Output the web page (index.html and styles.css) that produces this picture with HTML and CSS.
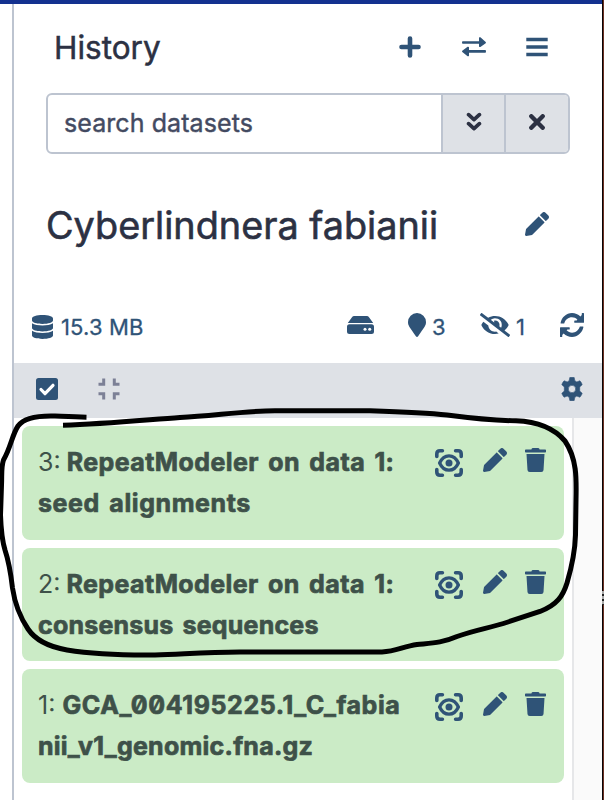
FILE: index.html
```html
<!DOCTYPE html>
<html lang="en">
<head>
<meta charset="utf-8">
<title>History</title>
<link rel="stylesheet" href="styles.css">
</head>
<body>
<svg class="defs" aria-hidden="true">
  <symbol id="pencil" viewBox="0 0 512 512"><path d="M498 142l-46 46c-5 5-13 5-17 0L324 77c-5-5-5-12 0-17l46-46c19-19 49-19 68 0l60 60c19 19 19 49 0 68zM285 99L22 362 0 484c-3 16 12 30 28 28l122-22 262-262c5-5 5-13 0-17L301 99c-4-5-12-5-16 0z"/></symbol>
  <symbol id="trash" viewBox="0 0 448 512"><path d="M432 32H312l-9-19A24 24 0 0 0 281 0H167a24 24 0 0 0-22 13l-9 19H16A16 16 0 0 0 0 48v32a16 16 0 0 0 16 16h416a16 16 0 0 0 16-16V48a16 16 0 0 0-16-16zM32 128l21 339a48 48 0 0 0 48 45h246a48 48 0 0 0 48-45l21-339z"/></symbol>
  <symbol id="view" viewBox="0 0 28 28"><g fill="none" stroke="currentColor" stroke-width="3.600" stroke-linecap="round"><path d="M7.400 1.800H5Q1.800 1.800 1.800 5v2.400M20.600 1.800H23q3.200 0 3.200 3.200v2.400M7.400 26.200H5Q1.800 26.200 1.800 23v-2.400M20.600 26.200H23q3.200 0 3.200-3.200v-2.400"/><path d="M4.600 14C9 4.400 19 4.400 23.400 14C19 23.600 9 23.600 4.600 14z" stroke-width="3.300" stroke-linejoin="round"/></g><circle cx="14" cy="14" r="3.500"/></symbol>
</svg>
<div class="topbar"></div>
<div class="window">
  <main class="panel">
    <header class="head">
      <h1>History</h1>
      <nav class="head-actions">
        <svg width="22" height="22" viewBox="0 0 22 22"><path d="M11 2.500v17M2.500 11h17" fill="none" stroke="currentColor" stroke-width="4.600" stroke-linecap="round"/></svg>
        <svg width="24" height="20" viewBox="0 0 24 20"><path d="M.8 4.200H17V.6q.6-.6 1.400-.3L23.700 5q.5.600 0 1.200L18.400 10q-1 .2-1.400-.6V6.800H.8Q0 6.800 0 5.500T.8 4.200zM23.200 13H7V10.200q-.4-.8-1.400-.4L.3 13.800q-.5.600 0 1.200l5.300 4.300q.9.200 1.400-.5V15.800h16.200q.8 0 .8-1.400t-.8-1.400z"/></svg>
        <svg width="22" height="20" viewBox="0 0 22 20"><path d="M2 2.500h18M2 10h18M2 17.500h18" fill="none" stroke="currentColor" stroke-width="3.400" stroke-linecap="square"/></svg>
      </nav>
    </header>
    <div class="search">
      <div class="search-input">search datasets</div>
      <div class="search-btn"><svg width="16" height="20" viewBox="0 0 16 20"><path d="M2.600 2.600L8 7.600l5.400-5M2.600 11.600L8 16.600l5.400-5" fill="none" stroke="currentColor" stroke-width="3.700" stroke-linecap="round" stroke-linejoin="round"/></svg></div>
      <div class="search-btn"><svg width="16" height="16" viewBox="0 0 16 16"><path d="M2.300 2.300l11.400 11.400M13.700 2.300L2.300 13.700" fill="none" stroke="currentColor" stroke-width="4.400" stroke-linecap="round"/></svg></div>
    </div>
    <div class="name">
      <h2>Cyberlindnera fabianii</h2>
      <svg width="24" height="24"><use href="#pencil"/></svg>
    </div>
    <div class="stats">
      <div class="stat size">
        <svg width="21" height="24" viewBox="0 0 448 512"><path d="M448 73v46c0 40-100 73-224 73S0 159 0 119V73C0 33 100 0 224 0s224 33 224 73zM448 176v103c0 40-100 73-224 73S0 319 0 279V176c48 33 136 48 224 48s176-15 224-48zM448 336v103c0 40-100 73-224 73S0 479 0 439V336c48 33 136 48 224 48s176-15 224-48z"/></svg>
        <span>15.3 MB</span>
      </div>
      <svg class="disk" width="27" height="18" viewBox="0 0 27 18"><path d="M5 1.200Q5.800 0 7.200 0h12.600Q21.200 0 22 1.200L26.200 7H.8zM2.500 8.200h22Q27 8.200 27 10.700v4.800q0 2.500-2.500 2.500h-22Q0 18 0 15.500v-4.800q0-2.500 2.500-2.500z"/><circle class="led-disk" cx="18" cy="13.300" r="1.500"/><circle class="led-disk" cx="22.700" cy="13.300" r="1.500"/></svg>
      <div class="stat active">
        <svg width="18" height="24" viewBox="0 0 384 512"><path d="M172 502C27 291 0 270 0 192a192 192 0 0 1 384 0c0 78-27 99-172 310-10 13-30 13-40 0z"/></svg>
        <span>3</span>
      </div>
      <div class="stat hidden">
        <svg width="30" height="24" viewBox="0 0 640 512"><path d="M320 400c-76 0-137-59-143-133L72 185c-14 18-27 36-37 56a32 32 0 0 0 0 29C89 377 197 448 320 448c27 0 53-4 78-10l-52-41a143 143 0 0 1-26 3zM634 458L523 372a331 331 0 0 0 82-102 32 32 0 0 0 0-29C551 135 443 64 320 64c-51 0-102 13-147 37L45 3A16 16 0 0 0 23 6L3 31a16 16 0 0 0 3 23l589 455a16 16 0 0 0 22-3l20-25a16 16 0 0 0-3-23zM450 316l-39-31a95 95 0 0 0-116-122 48 48 0 0 1 9 29 46 46 0 0 1-1 10l-74-57A143 143 0 0 1 464 256c0 22-5 42-14 60z"/></svg>
        <span>1</span>
      </div>
      <svg class="sync" width="24" height="24" viewBox="0 0 512 512"><path d="M371 142C339 109 298 91 255 91 178 91 111 144 92 217q-2 9-12 9H24q-13 0-12-13C34 94 134 0 256 0c68 0 132 27 180 75L464 45V12q0-12 12-12h24q12 0 12 12v184q0 12-12 12H316q-12 0-12-12v-24q0-12 12-12h38zM141 370c32 33 73 51 116 51 77 0 144-53 163-126q2-9 12-9h56q13 0 12 13C478 418 378 512 256 512c-68 0-132-27-180-75L48 467v33q0 12-12 12H12q-12 0-12-12V316q0-12 12-12h184q12 0 12 12v24q0 12-12 12h-38z"/></svg>
    </div>
    <div class="toolbar">
      <svg width="22" height="22" viewBox="0 0 22 22"><rect width="22" height="22" rx="2.500"/><path class="tick" d="M5 11.500l4 4.200 8-8.400"/></svg>
      <svg class="collapse" width="22" height="22" viewBox="0 0 22 22"><path d="M.5 6.200h5.200V.5M21.500 6.200h-5.200V.5M.5 15.800h5.200v5.700M21.500 15.800h-5.200v5.700"/></svg>
      <svg class="cog" width="22" height="24" viewBox="0 0 22 24"><path d="M8.800.5q2.200-.5 4.400 0l.6 3.200 2 1.200 3.100-1.100q1.600 1.700 2.300 3.900l-2.500 2.200v4.200l2.500 2.200q-.7 2.200-2.300 3.900l-3.100-1.100-2 1.200-.6 3.200q-2.200.5-4.400 0l-.6-3.200-2-1.200-3.100 1.100Q1.500 18.500.8 16.300l2.500-2.200V9.900L.8 7.700q.7-2.200 2.300-3.900l3.100 1.100 2-1.200zM11 8.300a3.700 3.700 0 1 0 0 7.400 3.700 3.700 0 1 0 0-7.400z" fill-rule="evenodd" stroke="currentColor" stroke-width=".6" stroke-linejoin="round"/></svg>
    </div>
    <div class="body">
      <section class="list">
        <article class="card">
          <div class="label">3: <b class="w1">RepeatModeler on data 1:</b><br><b class="w2">seed alignments</b></div>
          <div class="tools"><svg width="28" height="28"><use href="#view"/></svg><svg width="24" height="24"><use href="#pencil"/></svg><svg width="21" height="24"><use href="#trash"/></svg></div>
        </article>
        <article class="card">
          <div class="label">2: <b class="w1">RepeatModeler on data 1:</b><br><b class="w3">consensus sequences</b></div>
          <div class="tools"><svg width="28" height="28"><use href="#view"/></svg><svg width="24" height="24"><use href="#pencil"/></svg><svg width="21" height="24"><use href="#trash"/></svg></div>
        </article>
        <article class="card">
          <div class="label">1: <b class="w4">GCA_004195225.1_C_fabia</b><br><b class="w5">nii_v1_genomic.fna.gz</b></div>
          <div class="tools"><svg width="28" height="28"><use href="#view"/></svg><svg width="24" height="24"><use href="#pencil"/></svg><svg width="21" height="24"><use href="#trash"/></svg></div>
        </article>
      </section>
      <div class="gutter"></div>
    </div>
  </main>
  <div class="edge"><i></i></div>
</div>
<svg class="ink" width="604" height="800" viewBox="0 0 604 800"><path d="M86.500 417.200C75 417 66 416.500 55 416C38 415.500 24 417.500 18 426C12 435 11 447 3.500 460C1 467 2 475 1.500 485L.5 515C1 530 2 540 5 550C9 562 11 575 12.500 588C15 605 20 617 28 629C36 641 50 647 67 650C95 654.500 125 655.300 155 655C185 654 205 652.300 240 652H382C396 651.500 403 646.500 417 644.500C432 643 442 643 457 636.500C475 630 490 628 508 622L540 611.500C557 605 563 596 567 583C572 566 575 553 575.500 535L576 500C576.500 478 577 459 565 441C552 426 535 421.500 516 420.800C490 420.500 470 418 447 415C425 412.500 395 411.500 370 410.700H275C245 411 215 415.500 180 417.500C145 420 105 424 63 425.300"/></svg>
</body>
</html>
```
FILE: styles.css
```css
* { box-sizing: border-box; }
body {
  margin: 0;
  width: 604px;
  height: 800px;
  overflow: hidden;
  display: flex;
  flex-direction: column;
  background: #fff;
  color: #2c3143;
  font-family: Inter, "Liberation Sans", sans-serif;
}
h1, h2 { margin: 0; font-weight: 400; }
svg { display: block; flex: none; fill: currentColor; }
.defs { position: absolute; width: 0; height: 0; }
.topbar { height: 4px; width: 602px; flex: none; background: #13318f; }
.window { flex: 1; display: flex; min-height: 0; }
.panel {
  width: 590px;
  margin-left: 12px;
  border-left: 2px solid #bdc4d0;
  display: flex;
  flex-direction: column;
}
.head { height: 89px; flex: none; display: flex; justify-content: space-between; padding: 0 54px 0 40px; }
h1 { font-size: 31.500px; line-height: 88px; -webkit-text-stroke: .5px; }
.head-actions { display: flex; align-items: center; gap: 42px; height: 86px; color: #2f5377; }
.head-actions svg:first-child { margin-right: -1px; }
.head-actions svg:nth-child(2) { margin-right: -2px; }
.search {
  height: 61px;
  flex: none;
  display: flex;
  margin: 0 32px;
  border: 2px solid #bdc4d0;
  border-radius: 6px;
  overflow: hidden;
}
.search-input { flex: 1; padding-left: 16px; font-size: 25px; line-height: 57px; letter-spacing: .08px; color: #434a61; -webkit-text-stroke: .4px; }
.search-btn { width: 63px; border-left: 2px solid #bdc4d0; background: #dee1e6; display: flex; align-items: center; justify-content: center; padding-bottom: 3px; }
.search-btn + .search-btn { width: 64px; }
.name { height: 144px; flex: none; display: flex; align-items: center; justify-content: space-between; padding: 0 53px 0 32px; }
.name svg { color: #2f5377; margin-top: -5px; }
h2 { font-size: 37.800px; -webkit-text-stroke: .6px; line-height: 48px; margin-top: -2px; }
.stats { height: 65px; flex: none; display: flex; align-items: flex-start; padding: 15px 18px 0; color: #2f5377; font-size: 22px; line-height: 28px; -webkit-text-stroke: .3px; }
.stat { display: flex; }
.size { width: 315px; gap: 8px; }
.size span { letter-spacing: .15px; }
.size svg { margin-top: 2px; }
.disk { margin-top: 3px; }
.led-disk { fill: #fff; }
.active { margin-left: 34px; width: 72px; gap: 6px; }
.hidden { width: 80px; gap: 6px; }
.toolbar { height: 55px; flex: none; display: flex; align-items: center; padding: 0 19px 3px 22px; background: #dee1e6; color: #2f5377; }
.tick { fill: none; stroke: #fff; stroke-width: 3.200px; stroke-linecap: round; stroke-linejoin: round; }
.collapse { margin-left: 40px; fill: none; stroke: #7c8096; stroke-width: 3px; }
.cog { margin-left: auto; }
.body { flex: 1; display: flex; }
.list { width: 558px; padding: 8px 8px 0; display: flex; flex-direction: column; gap: 8px; }
.gutter { flex: 1; border-left: 2px solid #e6e7e9; background: #fafafa; }
.card { height: 113.700px; display: flex; justify-content: space-between; padding: 16px 18px 0 16px; border-radius: 8px; background: #cbebc6; }
.label { font-size: 25px; line-height: 41px; color: #3e5149; white-space: nowrap; font-feature-settings: "zero"; }
.label b { font-weight: 700; -webkit-text-stroke: .7px; }
.w1 { margin-left: -1px; letter-spacing: .42px; word-spacing: 3px; }
.w2 { letter-spacing: .58px; word-spacing: 3px; }
.w3 { letter-spacing: .2px; word-spacing: 3px; }
.w4 { letter-spacing: .6px; }
.w5 { letter-spacing: .25px; }
.tools { display: flex; gap: 19px; padding-top: 6px; color: #2f5377; }
.tools svg:first-child { margin: 1px 1px 0 0; }
.tools svg:last-child { margin-left: -1px; }
.card:last-child .tools { padding-top: 7px; }
.edge { width: 2px; height: 800px; margin-top: -4px; background: #090507; border-right: 1px solid #6b3022; }
.edge i { display: block; width: 3px; height: 14px; margin-top: 591px; background: repeating-linear-gradient(#aaa 0 3px, #222 3px 5px); }
.ink { position: absolute; inset: 0; fill: none; stroke: #000; stroke-width: 5px; }
```
